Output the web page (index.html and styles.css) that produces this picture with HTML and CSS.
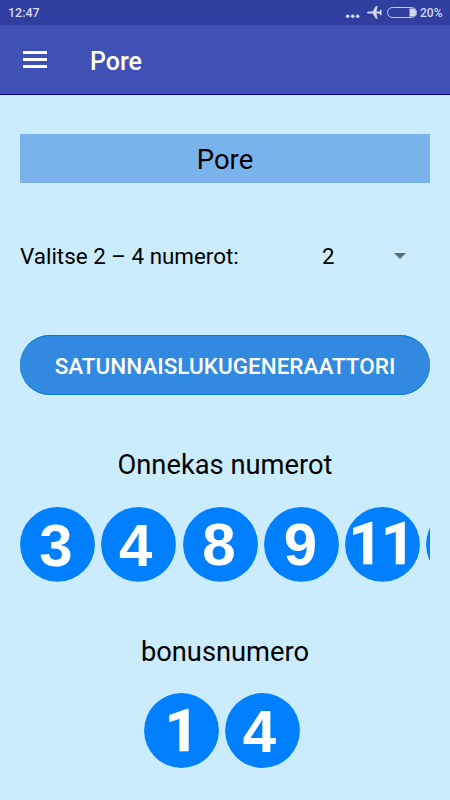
FILE: index.html
```html
<!DOCTYPE html>
<html lang="fi">
<head>
<meta charset="utf-8">
<title>Pore</title>
<link rel="stylesheet" href="styles.css">
</head>
<body>
<div class="status">
  <span class="clock">12:47</span>
  <svg class="status-icons" width="74" height="25" viewBox="0 0 74 25">
    <g fill="#d6daf0">
      <circle cx="2.600" cy="16.200" r="1.800"/><circle cx="7.700" cy="16.200" r="1.800"/><circle cx="12.700" cy="16.200" r="1.800"/>
      <path d="M22 12.500q0-.9 1.500-.9h4.100L31 6h1.600l-1.200 5.600h3.100l.8-1.900h1.200v5.600h-1.200l-.8-1.900h-3.100l1.200 5.400H31l-3.400-5.400h-4.100q-1.500 0-1.500-.9z"/>
      <path d="M64.500 8.500h3.200q3.300.4 3.300 4t-3.300 4h-3.200z"/>
    </g>
    <rect x="42.500" y="7.500" width="29" height="10" rx="5" fill="none" stroke="#c5caea"/>
  </svg>
  <span class="percent">20%</span>
</div>
<header class="appbar">
  <div class="menu"><i></i><i></i><i></i></div>
  <h1>Pore</h1>
</header>
<main>
  <h2 class="banner">Pore</h2>
  <div class="picker">
    <span class="picker-label">Valitse 2 – 4 numerot:</span>
    <span class="picker-value">2</span>
    <span class="arrow"></span>
  </div>
  <button class="generate">SATUNNAISLUKUGENERAATTORI</button>
  <h3 class="caption">Onnekas numerot</h3>
  <div class="balls">
    <svg class="ball" viewBox="0 0 75 75"><circle cx="37.500" cy="37.400" r="37.400"/><text x="36" y="59">3</text></svg>
    <svg class="ball" viewBox="0 0 75 75"><circle cx="37.500" cy="37.400" r="37.400"/><text x="34.800" y="59">4</text></svg>
    <svg class="ball" viewBox="0 0 75 75"><circle cx="37.500" cy="37.400" r="37.400"/><text x="36" y="58">8</text></svg>
    <svg class="ball" viewBox="0 0 75 75"><circle cx="37.500" cy="37.400" r="37.400"/><text x="36.500" y="58">9</text></svg>
    <svg class="ball" viewBox="0 0 75 75"><circle cx="37.500" cy="37.400" r="37.400"/><text class="one" x="3.500 36" y="57">11</text></svg>
    <svg class="ball" viewBox="0 0 75 75"><circle cx="37.500" cy="37.400" r="37.400"/></svg>
  </div>
  <h3 class="caption bonus">bonusnumero</h3>
  <div class="balls bonus-balls">
    <svg class="ball" viewBox="0 0 75 75"><circle cx="37.500" cy="37.500" r="37.400"/><text class="one" x="20.700" y="58">1</text></svg>
    <svg class="ball" viewBox="0 0 75 75"><circle cx="37.500" cy="37.500" r="37.400"/><text x="34.500" y="59">4</text></svg>
  </div>
</main>
</body>
</html>
```

FILE: styles.css
```css
* { box-sizing: border-box; }
body {
  margin: 0;
  height: 800px;
  overflow: hidden;
  background: #cbecfd;
  color: #000;
  font-family: Roboto, "Liberation Sans", sans-serif;
}
h1, h2, h3 { margin: 0; font-weight: 400; }
.status {
  display: flex;
  align-items: center;
  height: 25px;
  padding: 0 8px;
  background: #303f9f;
  color: #d6daf0;
  font-size: 12.500px;
  font-weight: 500;
}
.status-icons { margin-left: auto; }
.percent { width: 22px; margin-left: 1px; font-size: 12px; }
.appbar {
  display: flex;
  align-items: center;
  height: 70px;
  padding-left: 23px;
  background: #3f51b5;
  border-bottom: 1px solid #0000a0;
  color: #fff;
}
.menu { display: grid; gap: 4px; width: 24px; margin-right: 43px; }
.menu i { height: 3px; background: #fff; }
.appbar h1 { font-size: 25px; font-weight: 500; line-height: 30px; padding-top: 4px; }
main { padding: 39px 20px 0; }
.banner {
  height: 49px;
  background: #7ab3ec;
  font-size: 27.500px;
  line-height: 51px;
  text-align: center;
}
.picker {
  display: flex;
  align-items: center;
  height: 40px;
  margin-top: 53px;
  font-size: 22.400px;
}
.picker-label { width: 302px; }
.picker-value { width: 72px; }
.arrow {
  border: 6px solid transparent;
  border-top-color: #5f6f78;
  border-bottom: 0;
}
.generate {
  display: block;
  width: 100%;
  height: 60px;
  margin-top: 59px;
  padding: 2px 0 0;
  border: 0;
  border-radius: 30px;
  background: #3289e0;
  box-shadow: inset 0 1px #0878dc, inset 0 -1px #0878dc;
  color: #fff;
  font: 500 22.500px Roboto, "Liberation Sans", sans-serif;
}
.caption {
  margin-top: 50px;
  font-size: 27.300px;
  line-height: 40px;
  text-align: center;
}
.balls {
  display: flex;
  gap: 6.300px;
  height: 75px;
  margin-top: 21.500px;
  overflow: hidden;
}
.ball { flex: none; width: 75px; height: 75px; fill: #0080ff; }
.ball text {
  fill: #fff;
  font: 700 60px "Liberation Sans", sans-serif;
  text-anchor: middle;
}
.ball .one {
  font-family: Roboto, sans-serif;
  text-anchor: start;
  stroke: #fff;
  stroke-width: 0.500px;
}
.bonus { margin-top: 50px; }
.bonus-balls { justify-content: center; padding-right: 6px; }
```
